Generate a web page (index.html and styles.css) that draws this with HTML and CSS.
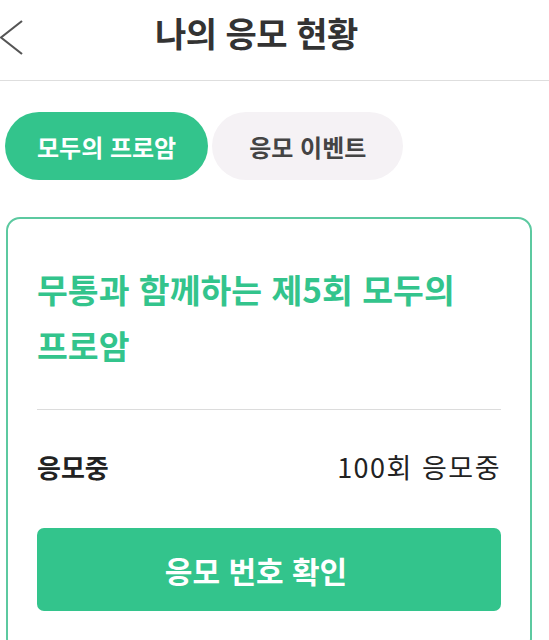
FILE: index.html
```html
<!DOCTYPE html>
<html lang="ko">
<head>
    <meta charset="UTF-8">
    <meta name="viewport" content="width=device-width, initial-scale=1.0">
    <title>나의 응모 현황</title>
    <link rel="stylesheet" href="styles.css">
</head>
<body>
    <header class="topbar">
        <button class="back" aria-label="뒤로">
            <svg width="24" height="36" viewBox="0 0 24 36">
                <polyline points="22,1 1,17.5 22,34" fill="none" stroke="#555" stroke-width="2.2" />
            </svg>
        </button>
        <h1 class="page-title">나의 응모 현황</h1>
    </header>

    <div class="tabs">
        <button class="tab active">모두의 프로암</button>
        <button class="tab">응모 이벤트</button>
    </div>

    <div class="card">
        <h2 class="card-title">무통과 함께하는 제5회 모두의 프로암</h2>
        <div class="card-row">
            <span class="row-label">응모중</span>
            <span class="row-value">100회 응모중</span>
        </div>
        <button class="confirm">응모 번호 확인</button>
    </div>
</body>
</html>
```

FILE: styles.css
```css
body {
    margin: 0;
    padding: 0;
    background: #fff;
    color: #333;
    font-family: "Noto Sans CJK KR", "Noto Sans", sans-serif;
}

button {
    font-family: inherit;
    border: none;
    cursor: pointer;
}

.topbar {
    height: 81px;
    display: flex;
    align-items: flex-start;
    border-bottom: 1px solid #dedede;
    box-sizing: border-box;
}

.back {
    background: none;
    padding: 0;
    margin-top: 20px;
    width: 24px;
    height: 36px;
    display: flex;
}

.page-title {
    margin: 9px 0 0 131px;
    font-size: 34px;
    line-height: 48px;
    font-weight: 700;
    color: #333;
    letter-spacing: -0.5px;
}

.tabs {
    display: flex;
    gap: 4px;
    padding: 31px 5px 0;
}

.tab {
    height: 68px;
    padding: 0 37px;
    border-radius: 34px;
    font-size: 24px;
    font-weight: 700;
    background: #f5f2f5;
    color: #444;
}

.tab.active {
    padding: 0 32px;
    background: #33c48c;
    color: #fff;
}

.card {
    margin: 37px 17px 0 6px;
    border: 2px solid #5cc9a0;
    border-radius: 14px;
    padding: 0 29px 40px;
}

.card-title {
    margin: 0;
    padding: 42px 0 36px;
    font-size: 33.5px;
    line-height: 56px;
    font-weight: 700;
    color: #33c48c;
    word-break: keep-all;
    border-bottom: 1px solid #dcdcdc;
}

.card-row {
    display: flex;
    justify-content: space-between;
    align-items: center;
    padding: 39px 0 43px;
    font-size: 26px;
    line-height: 36px;
    color: #222;
}

.row-label {
    font-weight: 700;
}

.row-value {
    font-size: 27px;
    letter-spacing: 1.5px;
}

.confirm {
    display: block;
    width: 100%;
    height: 83px;
    padding: 0 26px 0 0;
    border-radius: 7px;
    background: #33c48c;
    color: #fff;
    font-size: 30px;
    font-weight: 700;
}
```
